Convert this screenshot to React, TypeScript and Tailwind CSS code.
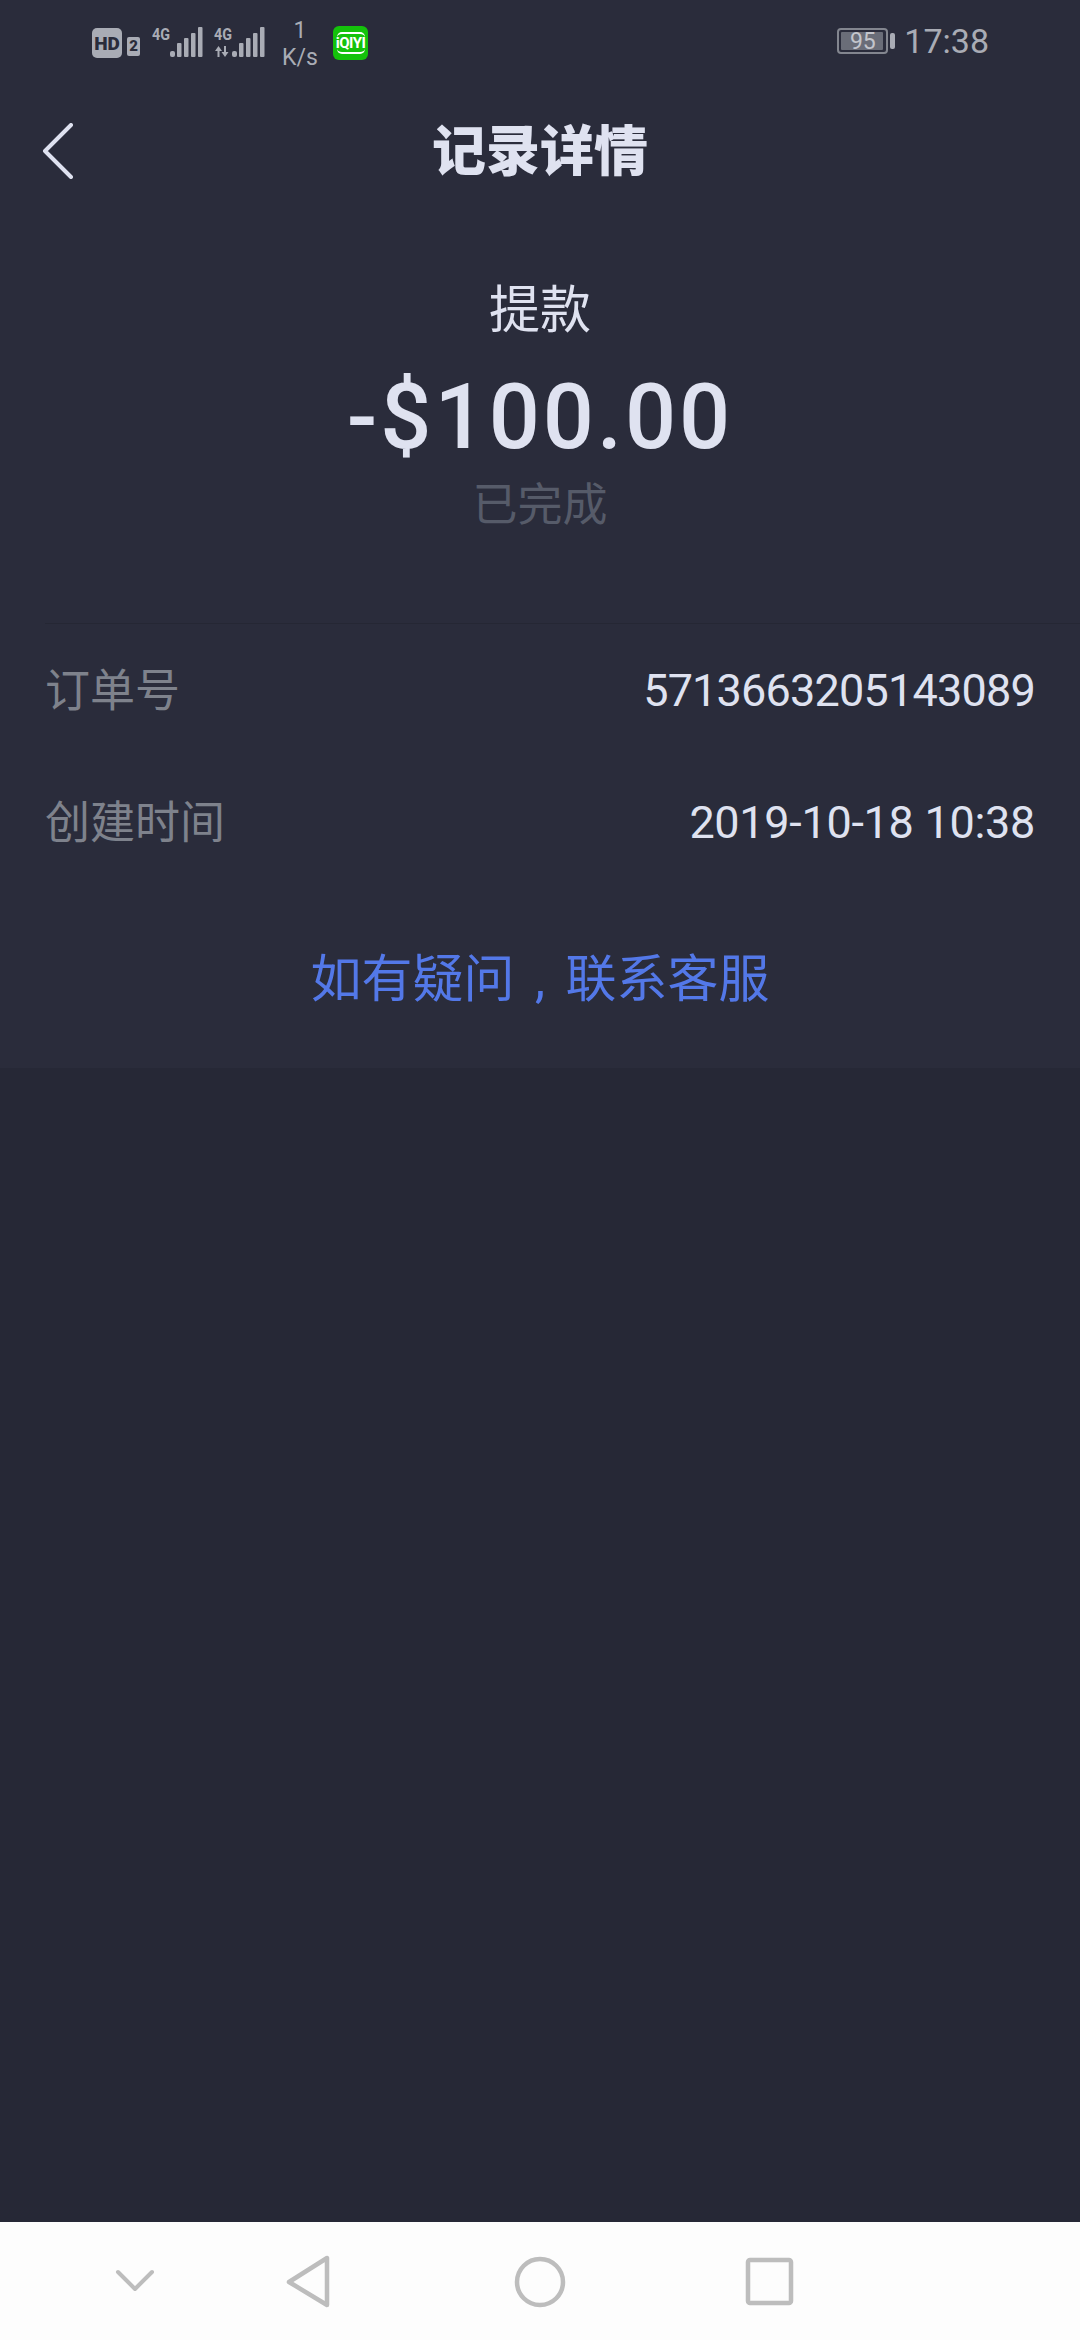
const cjk = "font-['Roboto','Noto_Sans_CJK_SC',sans-serif]";

function SignalBars({ arrows }: { arrows?: boolean }) {
  return (
    <svg width="51" height="36" viewBox="0 0 51 36" className="text-[#a9acb5]">
      <text x="0" y="15" fontSize="17" fontWeight="700" fill="currentColor" fontFamily="Roboto" textLength="18" lengthAdjust="spacingAndGlyphs">4G</text>
      {arrows ? (
        <path d="M1 26l3.500-5 3.500 5H5.500v6h-2v-6zM10 21h2v6h2.500l-3.500 5-3.500-5H10z" fill="currentColor" />
      ) : null}
      <rect x="18" y="26" width="5" height="6" rx="2" fill="currentColor" />
      <rect x="25" y="18" width="4.500" height="14" rx="1" fill="currentColor" />
      <rect x="32" y="13" width="4.500" height="19" rx="1" fill="currentColor" />
      <rect x="39" y="8" width="4.500" height="24" rx="1" fill="currentColor" />
      <rect x="46" y="2" width="4.500" height="30" rx="1" fill="currentColor" />
    </svg>
  );
}

function StatusBar() {
  return (
    <div className="h-[60px] pt-[25px] pl-[92px] pr-[91px] flex items-start justify-between font-['Roboto',sans-serif]">
      <div className="flex items-start">
        <div className="mt-[3px] w-[30px] h-[30px] rounded-[5px] bg-[#a9acb5] flex items-center justify-center text-[19px] font-black text-[#2a2c3b] leading-none">
          HD
        </div>
        <div className="mt-[12px] ml-[5px] w-[13px] h-[19px] rounded-[2px] bg-[#a9acb5] flex items-center justify-center text-[15px] font-black text-[#2a2c3b] leading-none">
          2
        </div>
        <div className="ml-[12px]">
          <SignalBars />
        </div>
        <div className="ml-[11px]">
          <SignalBars arrows />
        </div>
        <div className="ml-[13px] -mt-[8px] w-[44px] flex flex-col items-center text-[23px] leading-[27px] text-[#a9acb5]">
          <span>1</span>
          <span>K/s</span>
        </div>
        <div className="ml-[11px] mt-[1px] w-[35px] h-[34px] rounded-[6px] bg-[#14c20b] flex items-center justify-center">
          <div className="w-[28px] h-[22px] rounded-[5px] border-y-2 border-white flex items-center justify-center text-[15px] font-bold tracking-[-0.5px] text-white leading-none">
            iQIYI
          </div>
        </div>
      </div>
      <div className="flex items-center -mt-[1px]">
        <div className="relative w-[51px] h-[26px] rounded-[4px] border-2 border-[#83868f] p-[2px]">
          <div className="w-[42px] h-full rounded-[1px] bg-[#6a6d78]" />
          <span className="absolute inset-0 flex items-center justify-center text-[23px] leading-none text-[#c3c5cc]">95</span>
        </div>
        <div className="ml-[2px] w-[5px] h-[16px] rounded-[2px] bg-[#a9acb5]" />
        <span className="ml-[9px] text-[34px] leading-none text-[#a9acb5]">17:38</span>
      </div>
    </div>
  );
}

function Row({ label, value, spacing }: { label: string; value: string; spacing: string }) {
  return (
    <div className="flex items-center justify-between h-[132px]">
      <span className="pt-[3px] text-[45px] text-[#7e828c] leading-none">{label}</span>
      <span className={`text-[45px] text-[#dfe2f0] leading-none ${spacing}`}>{value}</span>
    </div>
  );
}

function BottomNav() {
  return (
    <div className="h-[118px] bg-[#fdfdfd] flex items-center">
      <svg width="1080" height="118" viewBox="0 0 1080 118" fill="none" stroke="#bdbdbd">
        <path d="M118 50l17 17 17-17" strokeWidth="4" strokeLinecap="round" strokeLinejoin="round" />
        <path d="M327 36v47L289 60z" strokeWidth="4.500" strokeLinejoin="round" />
        <circle cx="540" cy="60" r="23" strokeWidth="4.500" />
        <rect x="748" y="38" width="43" height="43" rx="2" strokeWidth="4.500" />
      </svg>
    </div>
  );
}

export default function App() {
  return (
    <div className={`w-[1080px] h-[2340px] flex flex-col bg-[#262836] ${cjk}`}>
      <div className="h-[1068px] bg-[#2a2c3b]">
        <StatusBar />
        <div className="relative h-[184px] flex items-center justify-center -mb-[1px]">
          <svg width="34" height="56" viewBox="0 0 34 56" fill="none" stroke="#dfe2f0" strokeWidth="4" strokeLinecap="round" strokeLinejoin="round" className="absolute left-[42px] top-[63px]">
            <path d="M29 2L3 28l26 26" />
          </svg>
          <h1 className="pt-[2px] text-[54px] font-black text-[#dfe2f0] leading-none">记录详情</h1>
        </div>
        <div className="flex flex-col items-center h-[380px]">
          <div className="text-[51px] leading-none text-[#dfe2f0] mt-[42px]">提款</div>
          <div className="text-[90px] font-medium tracking-[3px] leading-none text-[#dfe2f0] mt-[37px]">-$100.00</div>
          <div className="text-[45px] leading-none text-[#565b69] mt-[20px]">已完成</div>
        </div>
        <div className="ml-[45px] border-t border-[#252734] pr-[45px]">
          <Row label="订单号" value="5713663205143089" spacing="tracking-[-0.8px]" />
          <Row label="创建时间" value="2019-10-18 10:38" spacing="tracking-[-0.3px]" />
          <div className="flex justify-center -ml-[45px] -mr-[45px] mt-[66px]">
            <span className="text-[51px] leading-none text-[#5378e8]">
              如有疑问<span className="inline-block w-[51px] text-center">,</span>联系客服
            </span>
          </div>
        </div>
      </div>
      <div className="flex-1" />
      <BottomNav />
    </div>
  );
}
